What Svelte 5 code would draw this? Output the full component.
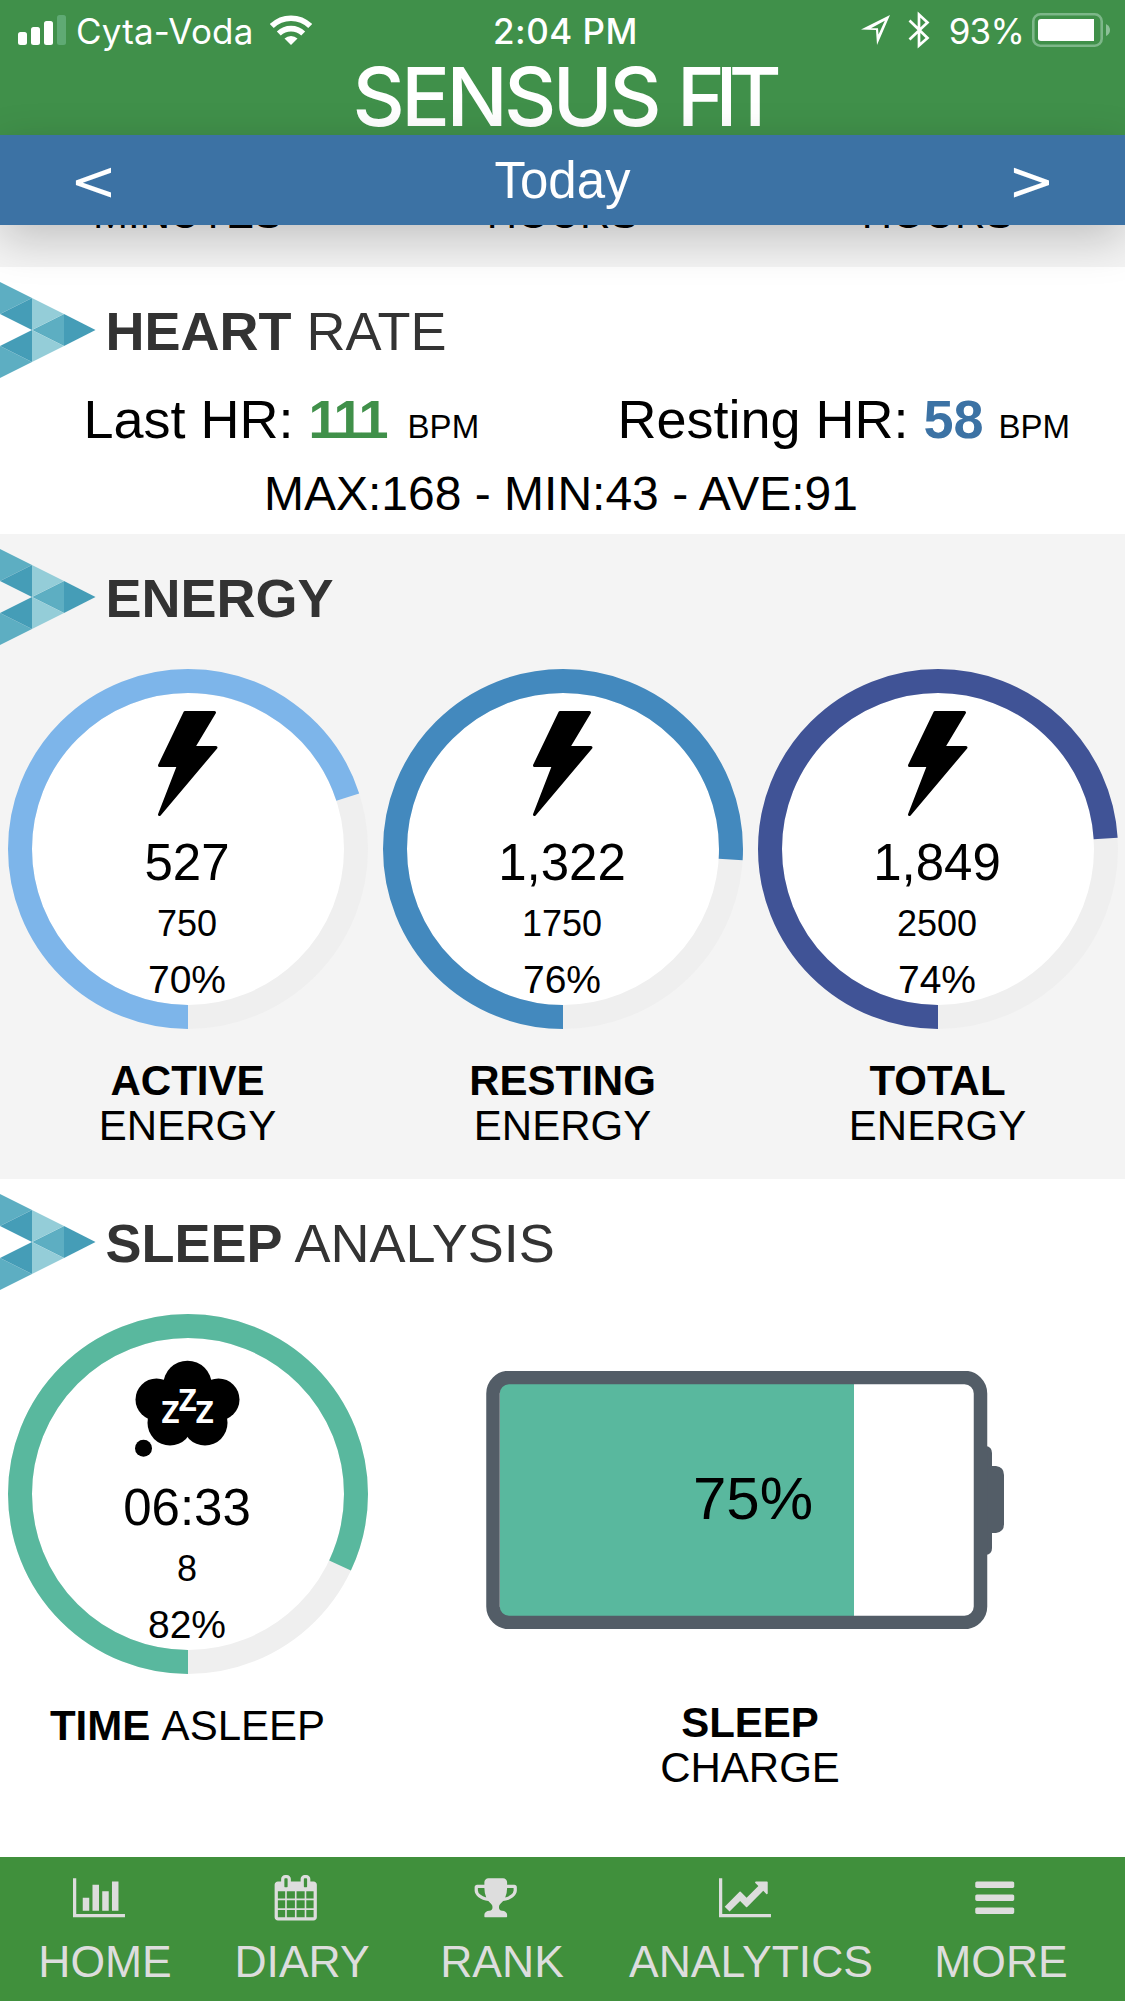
<script>
    const energy = [
        { value: '527', goal: '750', percent: 70, color: '#7db5ea', name: 'ACTIVE' },
        { value: '1,322', goal: '1750', percent: 76, color: '#4389be', name: 'RESTING' },
        { value: '1,849', goal: '2500', percent: 74, color: '#405396', name: 'TOTAL' }
    ];

    const sleep = { value: '06:33', goal: '8', percent: 82, color: '#59b89e' };

    const units = ['MINUTES', 'HOURS', 'HOURS'];

    const tabs = [
        {
            label: 'HOME',
            width: 2048,
            path: 'M640 896v512H384V896h256zm384-512v1024H768V384h256zm1024 1152v128H0V128h128v1408h1920zm-640-896v768h-256V640h256zm384-384v1152h-256V256h256z'
        },
        {
            label: 'DIARY',
            width: 1792,
            path: 'M192 1664h288v-288h-288v288zm352 0h320v-288h-320v288zm-352-352h288v-320h-288v320zm352 0h320v-320h-320v320zm-352-384h288v-288h-288v288zm736 736h320v-288h-320v288zm-384-736h320v-288h-320v288zm768 736h288v-288h-288v288zm-384-352h320v-320h-320v320zm-352-864v-288q0-13-9.5-22.5t-22.5-9.5h-64q-13 0-22.5 9.5t-9.5 22.5v288q0 13 9.5 22.5t22.5 9.5h64q13 0 22.5-9.5t9.5-22.5zm736 864h288v-320h-288v320zm-384-384h320v-288h-320v288zm384 0h288v-288h-288v288zm32-480v-288q0-13-9.5-22.5t-22.5-9.5h-64q-13 0-22.5 9.5t-9.5 22.5v288q0 13 9.5 22.5t22.5 9.5h64q13 0 22.5-9.5t9.5-22.5zm384-64v1280q0 52-38 90t-90 38h-1408q-52 0-90-38t-38-90v-1280q0-52 38-90t90-38h128v-96q0-66 47-113t113-47h64q66 0 113 47t47 113v96h384v-96q0-66 47-113t113-47h64q66 0 113 47t47 113v96h128q52 0 90 38t38 90z'
        },
        {
            label: 'RANK',
            width: 1792,
            path: 'M522 883q-74-162-74-371h-256v96q0 78 94.5 162t235.5 113zm1078-275v-96h-256q0 209-74 371 141-29 235.5-113t94.5-162zm128-128v128q0 71-41.5 143t-112 130-173 97.5-215.5 44.5q-42 54-95 95-38 34-52.5 72.5t-14.5 89.5q0 54 30.5 91t97.5 37q75 0 133.5 45.5t58.5 114.5v64q0 14-9 23t-23 9h-832q-14 0-23-9t-9-23v-64q0-69 58.5-114.5t133.5-45.5q67 0 97.5-37t30.5-91q0-51-14.5-89.5t-52.5-72.5q-53-41-95-95-113-5-215.5-44.5t-173-97.5-112-130-41.5-143v-128q0-40 28-68t68-28h288v-96q0-66 47-113t113-47h576q66 0 113 47t47 113v96h288q40 0 68 28t28 68z'
        },
        {
            label: 'ANALYTICS',
            width: 2048,
            path: 'M2048 1536v128H0V128h128v1408h1920zM1920 288v435q0 21-19.5 29.5t-35.5-7.5l-121-121-633 633q-10 10-23 10t-23-10l-233-233-416 416-192-192 585-585q10-10 23-10t23 10l233 233 464-464-121-121q-16-16-7.5-35.5t29.5-19.5h435q14 0 23 9t9 23z'
        },
        {
            label: 'MORE',
            width: 1792,
            path: 'M1664 1344v128q0 26-19 45t-45 19h-1408q-26 0-45-19t-19-45v-128q0-26 19-45t45-19h1408q26 0 45 19t19 45zm0-512v128q0 26-19 45t-45 19h-1408q-26 0-45-19t-19-45v-128q0-26 19-45t45-19h1408q26 0 45 19t19 45zm0-512v128q0 26-19 45t-45 19h-1408q-26 0-45-19t-19-45v-128q0-26 19-45t45-19h1408q26 0 45 19t19 45z'
        }
    ];
</script>

{#snippet heading(strong, rest)}
    <h2 class="heading">
        <svg width="96" height="96" viewBox="0 0 96 96">
            <g fill="#5daec2">
                <path d="M0 0L32 16L0 32z" />
                <path d="M64 32V64L32 48z" />
                <path d="M0 96L32 80L0 64z" />
            </g>
            <g fill="#459db7">
                <path d="M32 16V48L0 32z" />
                <path d="M64 32L95.500 48L64 64z" />
                <path d="M32 48V80L0 64z" />
            </g>
            <g fill="#94cdd8">
                <path d="M32 16L64 32L32 48z" />
                <path d="M32 48L64 64L32 80z" />
            </g>
        </svg>
        <span><b>{strong}</b> {rest}</span>
    </h2>
{/snippet}

{#snippet bolt()}
    <svg class="icon" width="105" height="105" viewBox="0 0 105 105">
        <path d="M50 1.500H79.500L58.500 36.500H81L24.500 103.500L43.500 54.500H24.500z" stroke="#000" stroke-width="3" stroke-linejoin="round" />
    </svg>
{/snippet}

{#snippet cloud()}
    <svg class="icon" width="105" height="105" viewBox="0 0 105 105">
        <circle cx="52.500" cy="29" r="24.300" />
        <circle cx="21.500" cy="43.500" r="21" />
        <circle cx="83.500" cy="43.500" r="21" />
        <circle cx="35" cy="67" r="22.500" />
        <circle cx="70" cy="67" r="22.500" />
        <circle cx="52.500" cy="50" r="20" />
        <circle cx="8.500" cy="92.300" r="8.500" />
        <g class="zzz">
            <text x="35.500" y="66.500">Z</text>
            <text x="52.700" y="55">Z</text>
            <text x="69.700" y="66.500">Z</text>
        </g>
    </svg>
{/snippet}

{#snippet gauge(item, icon)}
    <div class="gauge">
        <svg class="ring" width="360" height="360" viewBox="0 0 360 360">
            <circle cx="180" cy="180" r="168" fill="#fff" stroke="#efefef" stroke-width="24" />
            <circle
                cx="180"
                cy="180"
                r="168"
                fill="none"
                stroke={item.color}
                stroke-width="24"
                pathLength="100"
                stroke-dasharray="{item.percent} 100"
                transform="rotate(90 180 180)"
            />
        </svg>
        <div class="reading">
            {@render icon()}
            <div class="value">{item.value}</div>
            <div class="goal">{item.goal}</div>
            <div class="percent">{item.percent}%</div>
        </div>
    </div>
{/snippet}

<div class="app">
    <header>
        <div class="status">
            <div class="carrier">
                <svg width="49" height="30" viewBox="0 0 49 30" fill="#fff">
                    <rect y="17" width="9" height="13" rx="2.500" />
                    <rect x="13" y="12" width="9" height="18" rx="2.500" />
                    <rect x="26" y="6" width="9" height="24" rx="2.500" />
                    <rect x="39" width="9" height="30" rx="2.500" fill="#5faa74" />
                </svg>
                <span class="network">Cyta-Voda</span>
                <svg width="42" height="30" viewBox="0 0 42 30" fill="none" stroke="#fff" stroke-width="5.600">
                    <path d="M1.800 11A27.500 27.500 0 0 1 40.200 11" />
                    <path d="M8.800 18.600A17.500 17.500 0 0 1 33.200 18.600" />
                    <path d="M21 30L14.500 23.500A9.500 9.500 0 0 1 27.500 23.500z" fill="#fff" stroke="none" />
                </svg>
            </div>
            <span class="time">2:04 PM</span>
            <div class="power">
                <svg width="29" height="30" viewBox="0 0 29 30">
                    <path d="M0 14.500L29 0L16 30L15 15z M10 13.200L17 13.200L17.500 19.500L23.800 5.800z" fill="#fff" fill-rule="evenodd" />
                </svg>
                <svg class="bluetooth" width="22" height="38" viewBox="0 0 22 38" fill="none" stroke="#fff" stroke-width="2.700">
                    <path d="M1.500 9.500L19.500 27L11 34.500V3.500L19.500 11.500L1.500 28.500" />
                </svg>
                <span class="charge">93%</span>
                <svg width="79" height="34" viewBox="0 0 79 34">
                    <rect x="1.300" y="1.300" width="68.400" height="31.400" rx="7" fill="none" stroke="#7db789" stroke-width="2.600" />
                    <path d="M9 6H62V28H9Q6 28 6 25V9Q6 6 9 6z" fill="#fff" />
                    <path d="M74 11Q78 13 78 17T74 23z" fill="#8cc097" />
                </svg>
            </div>
        </div>
        <h1><span>SENSUS</span><span class="fit">FIT</span></h1>
    </header>

    <nav class="days">
        <span class="arrow">&lt;</span>
        <span>Today</span>
        <span class="arrow">&gt;</span>
    </nav>

    <section class="scrolled">
        {#each units as unit}
            <span>{unit}</span>
        {/each}
    </section>

    <section class="heart">
        {@render heading('HEART', 'RATE')}
        <div class="rates">
            <div>Last HR: <b class="last">111</b> <small>BPM</small></div>
            <div>Resting HR: <b class="rest">58</b> <small>BPM</small></div>
        </div>
        <div class="range">MAX:168 - MIN:43 - AVE:91</div>
    </section>

    <section class="energy">
        {@render heading('ENERGY', '')}
        <div class="columns">
            {#each energy as item}
                <div class="column">
                    {@render gauge(item, bolt)}
                    <div class="label"><b>{item.name}</b><br />ENERGY</div>
                </div>
            {/each}
        </div>
    </section>

    <section class="sleep">
        {@render heading('SLEEP', 'ANALYSIS')}
        <div class="columns">
            <div class="column">
                {@render gauge(sleep, cloud)}
                <div class="label"><b>TIME</b> ASLEEP</div>
            </div>
            <div class="column wide">
                <svg class="battery" width="518" height="258" viewBox="0 0 518 258">
                    <path d="M500 75Q506 76 506 82V95H510Q518 96 518 104V153Q518 161 510 162H506V177Q506 183 500 184z" fill="#535d67" />
                    <rect x="7" y="6.500" width="487.500" height="245" rx="16" fill="#fff" />
                    <path d="M368 10V248H14V10z" fill="#59b89e" />
                    <rect x="7" y="6.500" width="487.500" height="245" rx="16" fill="none" stroke="#535d67" stroke-width="13.500" />
                    <text x="267" y="148">75%</text>
                </svg>
                <div class="label"><b>SLEEP</b><br />CHARGE</div>
            </div>
        </div>
    </section>

    <footer>
        {#each tabs as tab}
            <div class="tab">
                <svg height="45.500" width={tab.width / 39.4} viewBox="0 0 {tab.width} 1792"><path d={tab.path} /></svg>
                <span>{tab.label}</span>
            </div>
        {/each}
    </footer>
</div>

<style>
    .app {
        display: flex;
        flex-direction: column;
        width: 1125px;
        height: 2001px;
        overflow: hidden;
        background: #fff;
        color: #000;
        font-family: "Liberation Sans", Arial, sans-serif;
    }
    svg {
        display: block;
        flex: none;
    }
    section {
        flex: none;
    }

    header {
        flex: none;
        height: 135px;
        background: #40904a;
        color: #fff;
    }
    .status {
        display: grid;
        grid-template-columns: 1fr auto 1fr;
        align-items: center;
        height: 60px;
        padding: 0 14px 0 18px;
        font-family: Inter, sans-serif;
        font-size: 35px;
        line-height: 46px;
    }
    .carrier,
    .power {
        display: flex;
        align-items: center;
    }
    .power {
        justify-content: flex-end;
    }
    .network {
        margin: 1px 16px 0 9px;
        letter-spacing: 0.2px;
    }
    .time {
        padding: 2px 0 0 2px;
        font-weight: 500;
        letter-spacing: 0.5px;
    }
    .bluetooth {
        margin: 0 19px 0 18px;
    }
    .charge {
        margin: 1px 8px 0 0;
        letter-spacing: -0.8px;
    }
    h1 {
        display: flex;
        justify-content: center;
        gap: 19px;
        height: 75px;
        margin: 0;
        font: 500 81px/75px Inter, sans-serif;
        letter-spacing: -3.6px;
    }
    h1 span {
        margin-top: 0;
    }
    h1 .fit {
        letter-spacing: -9px;
    }

    .days {
        position: relative;
        display: flex;
        flex: none;
        align-items: center;
        justify-content: space-between;
        height: 90px;
        padding: 2px 70px 0;
        box-sizing: border-box;
        background: #3c72a4;
        box-shadow: 0 14px 46px rgba(0, 0, 0, 0.21);
        color: #fff;
        font-size: 51px;
        line-height: 60px;
    }
    .arrow {
        font-family: "DejaVu Sans", sans-serif;
        font-size: 56px;
    }

    .scrolled {
        display: grid;
        grid-template-columns: repeat(3, 1fr);
        height: 42px;
        overflow: hidden;
        background: #f4f4f4;
        font-size: 42px;
        line-height: 45px;
        text-align: center;
    }
    .scrolled span {
        margin-top: -34px;
    }

    .heading {
        display: flex;
        align-items: center;
        gap: 9.5px;
        margin: 0;
        padding-top: 15px;
        color: #333;
        font-size: 54px;
        font-weight: normal;
        line-height: 60px;
    }
    .heading span {
        padding-top: 2px;
    }

    .heart {
        height: 267px;
    }
    .rates {
        display: grid;
        grid-template-columns: 1fr 1fr;
        height: 60px;
        margin-top: 11px;
        font-size: 54px;
        line-height: 60px;
        text-align: center;
    }
    .rates small {
        font-size: 33px;
    }
    .last {
        margin-right: 6px;
        color: #40904a;
        letter-spacing: -2px;
    }
    .rest {
        color: #3c72a4;
    }
    .range {
        margin-top: 17px;
        padding-right: 3px;
        font-size: 48px;
        line-height: 56px;
        text-align: center;
    }

    .energy {
        height: 645px;
        background: #f4f4f4;
    }
    .sleep {
        height: 678px;
    }
    .columns {
        display: flex;
        margin-top: 24px;
    }
    .column {
        width: 375px;
    }
    .column.wide {
        width: 750px;
    }
    .gauge {
        display: grid;
        width: 360px;
        height: 360px;
        margin-left: 8px;
    }
    .ring,
    .reading {
        grid-area: 1 / 1;
    }
    .reading {
        padding: 42px 2px 0 0;
        text-align: center;
    }
    .icon {
        margin: 0 0 0 127px;
    }
    .value {
        margin-top: 17px;
        font-size: 51px;
        line-height: 60px;
    }
    .goal {
        margin-top: 9px;
        font-size: 36px;
        line-height: 44px;
    }
    .percent {
        margin-top: 12px;
        font-size: 39px;
        line-height: 44px;
    }
    .zzz {
        fill: #fff;
        font: bold 31px "Noto Sans", sans-serif;
        text-anchor: middle;
    }
    .label {
        margin-top: 29px;
        font-size: 42px;
        line-height: 45px;
        text-align: center;
        word-spacing: 2px;
    }
    .battery {
        margin: 57px 0 0 111px;
    }
    .battery text {
        font-size: 60px;
        text-anchor: middle;
    }
    .wide .label {
        margin-top: 71px;
    }

    footer {
        display: grid;
        flex: none;
        grid-template-columns: 210px 184px 216px 282px 218px;
        height: 144px;
        background: #40903c;
        color: #ddd;
        font-size: 44.5px;
        line-height: 50px;
    }
    .tab {
        display: flex;
        flex-direction: column;
        align-items: center;
        padding-top: 18px;
    }
    .tab svg {
        margin: 0 12px 16px 0;
        fill: #ddd;
    }
</style>
